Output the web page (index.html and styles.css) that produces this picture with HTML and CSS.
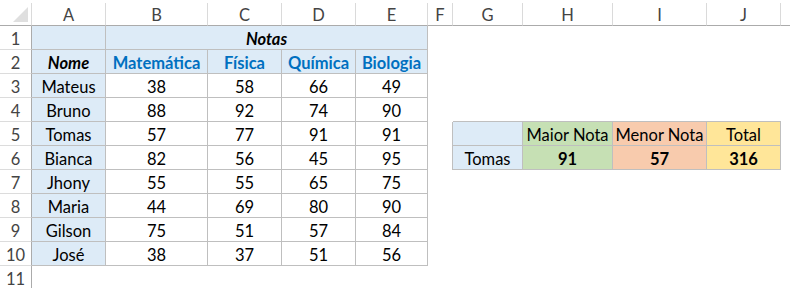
FILE: index.html
```html
<!DOCTYPE html>
<html lang="pt">
<head>
<meta charset="utf-8">
<title>Notas</title>
<link rel="stylesheet" href="styles.css">
</head>
<body>
<div class="sheet">
  <!-- column headers -->
  <div class="ch corner"><span class="tri"></span></div>
  <div class="ch">A</div><div class="ch">B</div><div class="ch">C</div><div class="ch">D</div><div class="ch">E</div><div class="ch">F</div><div class="ch">G</div><div class="ch">H</div><div class="ch">I</div><div class="ch">J</div><div class="ch last"></div>

  <!-- row 1 -->
  <div class="rh">1</div>
  <div class="c t blue"></div>
  <div class="c t blue span4 hdr-i">Notas</div>
  <div class="c"></div><div class="c"></div><div class="c"></div><div class="c"></div><div class="c"></div><div class="c"></div>

  <!-- row 2 -->
  <div class="rh">2</div>
  <div class="c t blue hdr-i">Nome</div>
  <div class="c t blue subj">Matemática</div>
  <div class="c t blue subj">Física</div>
  <div class="c t blue subj">Química</div>
  <div class="c t blue subj">Biologia</div>
  <div class="c"></div><div class="c"></div><div class="c"></div><div class="c"></div><div class="c"></div><div class="c"></div>

  <!-- row 3 -->
  <div class="rh">3</div>
  <div class="c t blue">Mateus</div><div class="c t">38</div><div class="c t">58</div><div class="c t">66</div><div class="c t">49</div>
  <div class="c"></div><div class="c"></div><div class="c"></div><div class="c"></div><div class="c"></div><div class="c"></div>

  <!-- row 4 -->
  <div class="rh">4</div>
  <div class="c t blue">Bruno</div><div class="c t">88</div><div class="c t">92</div><div class="c t">74</div><div class="c t">90</div>
  <div class="c"></div><div class="c bb"></div><div class="c bb"></div><div class="c bb"></div><div class="c bb"></div><div class="c"></div>

  <!-- row 5 -->
  <div class="rh">5</div>
  <div class="c t blue">Tomas</div><div class="c t">57</div><div class="c t">77</div><div class="c t">91</div><div class="c t">91</div>
  <div class="c br"></div>
  <div class="c t blue"></div>
  <div class="c t green">Maior Nota</div>
  <div class="c t orange">Menor Nota</div>
  <div class="c t yellow">Total</div>
  <div class="c"></div>

  <!-- row 6 -->
  <div class="rh">6</div>
  <div class="c t blue">Bianca</div><div class="c t">82</div><div class="c t">56</div><div class="c t">45</div><div class="c t">95</div>
  <div class="c br"></div>
  <div class="c t blue">Tomas</div>
  <div class="c t green b">91</div>
  <div class="c t orange b">57</div>
  <div class="c t yellow b">316</div>
  <div class="c"></div>

  <!-- row 7 -->
  <div class="rh">7</div>
  <div class="c t blue">Jhony</div><div class="c t">55</div><div class="c t">55</div><div class="c t">65</div><div class="c t">75</div>
  <div class="c"></div><div class="c"></div><div class="c"></div><div class="c"></div><div class="c"></div><div class="c"></div>

  <!-- row 8 -->
  <div class="rh">8</div>
  <div class="c t blue">Maria</div><div class="c t">44</div><div class="c t">69</div><div class="c t">80</div><div class="c t">90</div>
  <div class="c"></div><div class="c"></div><div class="c"></div><div class="c"></div><div class="c"></div><div class="c"></div>

  <!-- row 9 -->
  <div class="rh">9</div>
  <div class="c t blue">Gilson</div><div class="c t">75</div><div class="c t">51</div><div class="c t">57</div><div class="c t">84</div>
  <div class="c"></div><div class="c"></div><div class="c"></div><div class="c"></div><div class="c"></div><div class="c"></div>

  <!-- row 10 -->
  <div class="rh">10</div>
  <div class="c t blue">José</div><div class="c t">38</div><div class="c t">37</div><div class="c t">51</div><div class="c t">56</div>
  <div class="c"></div><div class="c"></div><div class="c"></div><div class="c"></div><div class="c"></div><div class="c"></div>

  <!-- row 11 -->
  <div class="rh">11</div>
  <div class="c"></div><div class="c"></div><div class="c"></div><div class="c"></div><div class="c"></div><div class="c"></div><div class="c"></div><div class="c"></div><div class="c"></div><div class="c"></div><div class="c"></div>
</div>
</body>
</html>
```
FILE: styles.css
```css
* { box-sizing: border-box; }
html, body { margin: 0; background: #ffffff; }
body {
  padding-top: 3px;
  font-family: Lato, "Open Sans", sans-serif;
  font-size: 16.5px;
  color: #000;
  overflow: hidden;
}
.sheet {
  display: grid;
  grid-template-columns: 32px 74px 102px 74px 74px 72px 25px 70px 90px 94px 74px 1fr;
  grid-template-rows: 23px repeat(11, 24px);
}
.ch {
  display: flex;
  align-items: center;
  justify-content: center;
  border-right: 1px solid #dadada;
  border-bottom: 1px solid #ababab;
  color: #444;
  padding-top: 1px;
}
.ch.last { border-right: none; }
.corner { position: relative; }
.tri {
  position: absolute;
  left: 13px;
  top: 4px;
  width: 15px;
  height: 15px;
  background: #dfdfdf;
  clip-path: polygon(100% 0, 100% 100%, 0 100%);
}
.rh {
  display: flex;
  align-items: center;
  justify-content: center;
  border-right: 1px solid #ababab;
  border-bottom: 1px solid #dcdcdc;
  color: #444;
  padding-top: 2px;
}
.c {
  display: flex;
  align-items: center;
  justify-content: center;
  padding-top: 2px;
  white-space: nowrap;
}
.t {
  border-right: 1px solid #bfbfbf;
  border-bottom: 1px solid #bfbfbf;
}
.bb { border-bottom: 1px solid #bfbfbf; }
.br { border-right: 1px solid #bfbfbf; }
.span4 { grid-column: span 4; }
.blue { background: #ddebf7; }
.green { background: #c6e0b4; }
.orange { background: #f8cbad; }
.yellow { background: #ffe699; }
.hdr-i { font-weight: 700; font-style: italic; }
.subj { font-weight: 700; color: #0070c0; }
.b { font-weight: 700; }
```
